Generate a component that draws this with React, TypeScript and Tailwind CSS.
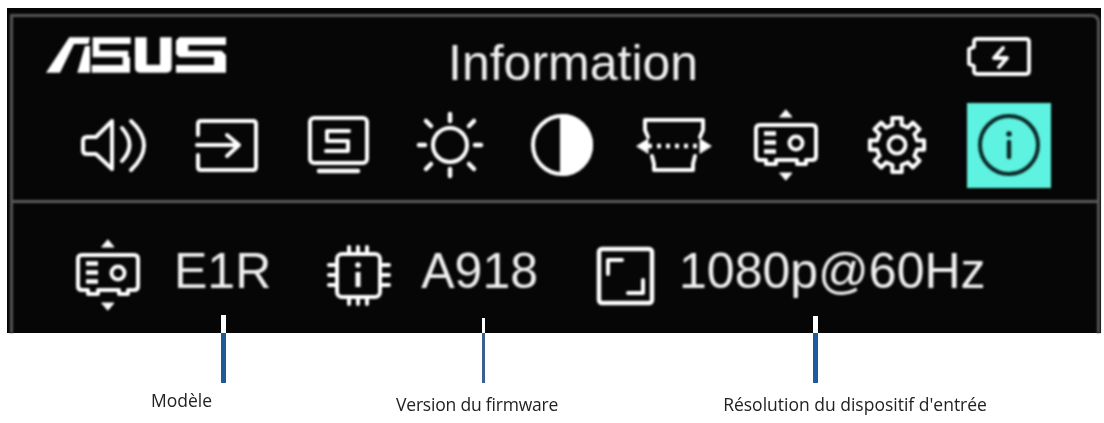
const sans = "[font-family:'Liberation_Sans',Arial,sans-serif]";

const gearPath = (() => {
  const cx = 897, cy = 145;
  const pts: string[] = [];
  for (let i = 0; i < 8; i++) {
    const a = -90 + i * 45;
    const p = (deg: number, r: number) => {
      const t = (deg * Math.PI) / 180;
      return `${(cx + r * Math.cos(t)).toFixed(1)} ${(cy + r * Math.sin(t)).toFixed(1)}`;
    };
    pts.push(p(a - 13, 20.5), p(a - 10, 27.5), p(a + 10, 27.5), p(a + 13, 20.5));
  }
  return "M" + pts.join(" L") + " Z";
})();

function Ico({ i, children }: { i: number; children: React.ReactNode }) {
  return (
    <svg
      width="112"
      height="85"
      viewBox={`${57 + 112 * i} 103 112 85`}
      fill="none"
      stroke="#ffffff"
      strokeWidth="4"
      strokeLinecap="round"
      strokeLinejoin="round"
    >
      {children}
    </svg>
  );
}

function ProjectorShape() {
  return (
    <>
      <path d="M760 125 H812 Q816 125 816 129 V156 Q816 160 812 160 H806 V164 H797 V160 H776 V164 H766 V160 H760 Q756 160 756 156 V129 Q756 125 760 125 Z" />
      <path d="M764 133.500 H776 M764 142.500 H776 M764 151.500 H776" strokeWidth="4.500" strokeLinecap="butt" />
      <circle cx="796" cy="143" r="6.500" />
      <path d="M786 110 L792 117 H780 Z" fill="#ffffff" strokeWidth="1" />
      <path d="M786 180 L792 173 H780 Z" fill="#ffffff" strokeWidth="1" />
    </>
  );
}

function Logo() {
  return (
    <svg width="195" height="52" viewBox="0 0 585 156" fill="#ffffff" className="shrink-0">
      <path d="M18 128 L88 22 H150 L146 42 H102 L60 128 Z" />
      <path d="M112 128 L135 48 H150 V128 Z" />
      <path d="M158 22 H272 V42 H178 V62 H265 V82 H270 V128 H155 V105 H248 V82 H158 V42 Z" />
      <path d="M285 22 H320 V104 H360 V22 H395 V112 Q395 128 380 128 H300 Q285 128 285 112 Z" />
      <path d="M418 22 H558 V45 H445 V62 H545 L558 76 V128 H408 V105 H522 V82 H418 L408 72 V32 Z" />
    </svg>
  );
}

function Battery() {
  return (
    <svg width="70" height="46" viewBox="965 33 70 46" fill="none" stroke="#ffffff" strokeWidth="3.800" strokeLinejoin="round" strokeLinecap="round" className="shrink-0">
      <path d="M978 39 H1027 Q1030 39 1030 42 V71 Q1030 74 1027 74 H978 Q975 74 975 71 V66 L970 64 V49 L975 47 V42 Q975 39 978 39 Z" />
      <path d="M1004 48 L995 58 H1008 L1000 67" />
    </svg>
  );
}

function Projector() {
  return (
    <svg width="68" height="78" viewBox="752 106 68 78" fill="none" stroke="#ffffff" strokeWidth="4" strokeLinecap="round" strokeLinejoin="round" className="shrink-0">
      <ProjectorShape />
    </svg>
  );
}

function Chip() {
  return (
    <svg width="66" height="64" viewBox="326 244 66 64" fill="none" stroke="#ffffff" strokeWidth="4" strokeLinecap="round" strokeLinejoin="round" className="mt-[8px] ml-[55px] shrink-0">
      <rect x="337" y="254" width="43" height="43" rx="5" />
      <path d="M349 247 V254 M358 247 V254 M367 247 V254 M349 297 V304 M358 297 V304 M367 297 V304 M329 265 H337 M329 275 H337 M329 285 H337 M380 265 H389 M380 275 H389 M380 285 H389" />
      <circle cx="358" cy="265" r="2.800" fill="#ffffff" stroke="none" />
      <path d="M358 272 V287" strokeWidth="5" strokeLinecap="butt" />
    </svg>
  );
}

function Resolution() {
  return (
    <svg width="60" height="60" viewBox="596 246 60 60" fill="none" stroke="#ffffff" strokeWidth="4.500" strokeLinecap="round" strokeLinejoin="round" className="mt-[10px] ml-[58px] shrink-0">
      <rect x="599" y="249" width="53" height="54" rx="3" />
      <path d="M622 260 H608 V274 M628 293 H643 V280" strokeWidth="4" />
    </svg>
  );
}

export default function App() {
  const value = `${sans} text-[50px] leading-[50px] text-[#f0f0f0] whitespace-nowrap shrink-0`;
  const label = "[font-family:'Open_Sans',sans-serif] text-[17.500px] leading-[20px] text-[#222222] whitespace-nowrap blur-[0.3px]";
  return (
    <div className="relative w-[1104px] h-[423px] bg-white overflow-hidden pt-[8px] pl-[7px]">
      <div className="w-[1094px] h-[325px] bg-[#060606] pt-[6px] pl-[3px]">
        <div className="w-[1090px] h-[319px] border-t-[3px] border-x-[3px] border-[#555555] rounded-tr-[8px] flex flex-col blur-[0.8px]">
          {/* header */}
          <div className="h-[86px] flex items-start pt-[13px] pl-[27px]">
            <Logo />
            <div className={`${sans} text-[50px] leading-[50px] text-[#f0f0f0] mt-[8px] ml-[213px] shrink-0 whitespace-nowrap`}>Information</div>
            <div className="mt-[3px] ml-[266px]"><Battery /></div>
          </div>
          {/* menu icons */}
          <div className="h-[85px] pl-[44px] flex">
            <Ico i={0}>
              <path d="M83 141 Q83 137 87 137 H96 L112 121 V169 L96 154 H87 Q83 154 83 150 Z" />
              <path d="M122 128 Q137 145 122 161" />
              <path d="M131 121 Q157 145 131 170" />
            </Ico>
            <Ico i={1}>
              <path d="M198 135 V124 Q198 121 201 121 H253 Q256 121 256 124 V167 Q256 170 253 170 H201 Q198 170 198 167 V155" />
              <path d="M197 145 H238 M227 135 L239 145 L227 156" />
            </Ico>
            <Ico i={2}>
              <rect x="310" y="118" width="57" height="45" rx="4" />
              <path d="M319 171 H358" strokeWidth="4.500" />
              <path d="M349 131 H327 V141 H348 V151 H326" />
            </Ico>
            <Ico i={3}>
              <circle cx="450" cy="145" r="17" />
              <path d="M419 145 H425 M475 145 H481 M450 114 V121 M450 169 V176 M426 121 L431 126 M474 121 L469 126 M426 169 L431 164 M474 169 L469 164" strokeWidth="4.500" />
            </Ico>
            <Ico i={4}>
              <circle cx="562" cy="145" r="29" />
              <path d="M562 116 A29 29 0 0 1 562 174 Z" fill="#ffffff" />
            </Ico>
            <Ico i={5}>
              <path d="M700 137 L703 130 V120 H645 V130 L648 137" />
              <path d="M652 156 L654 164 V170 H693 V164 L695 156" />
              <path d="M637 146 L648 139 V153 Z M711 146 L700 139 V153 Z" fill="#ffffff" strokeWidth="1" />
              <path d="M648 146 H700" strokeWidth="4.500" strokeDasharray="4 5" strokeLinecap="butt" />
            </Ico>
            <Ico i={6}>
              <ProjectorShape />
            </Ico>
            <Ico i={7}>
              <path d={gearPath} />
              <circle cx="897" cy="145" r="8.500" />
            </Ico>
            <div className="w-[112px] h-[85px] flex justify-center">
              <div className="w-[84px] h-[85px] bg-[#5ef2e0]">
                <svg width="84" height="85" viewBox="967 103 84 85" fill="none" stroke="#0c2a29" strokeWidth="4" strokeLinecap="round">
                  <circle cx="1009" cy="145" r="29" />
                  <path d="M1009 142 V157" strokeWidth="4.500" />
                  <circle cx="1009" cy="134" r="2.800" fill="#0c2a29" stroke="none" />
                </svg>
              </div>
            </div>
          </div>
          {/* divider */}
          <div className="mt-[12px] h-[3px] bg-[#5c5c5c] shrink-0" />
          {/* values */}
          <div className="flex items-start pl-[61px] pt-[33px]">
            <Projector />
            <div className={`${value} mt-[10px] ml-[32px]`}>E1R</div>
            <Chip />
            <div className={`${value} mt-[10px] ml-[29px]`}>A918</div>
            <Resolution />
            <div className={`${value} mt-[10px] ml-[23px]`}>1080p@60Hz</div>
          </div>
        </div>
      </div>

      {/* leader lines running from the panel to their captions */}
      <div className="absolute left-[221px] top-[315px] w-[5px] h-[18px] bg-white" />
      <div className="absolute left-[221px] top-[333px] w-[5px] h-[50px] bg-[#1f5a96]" />
      <div className="absolute left-[482px] top-[318px] w-[3px] h-[15px] bg-white" />
      <div className="absolute left-[482px] top-[333px] w-[3px] h-[50px] bg-[#3d5f8f]" />
      <div className="absolute left-[813px] top-[316px] w-[5px] h-[17px] bg-white" />
      <div className="absolute left-[813px] top-[333px] w-[5px] h-[50px] bg-[#1f5a9c]" />

      {/* captions */}
      <div className="flex items-start pl-[144px] mt-[57px]">
        <div className={label}>Modèle</div>
        <div className={`${label} mt-[4px] ml-[184px] tracking-[-0.2px]`}>Version du firmware</div>
        <div className={`${label} mt-[4px] ml-[165px]`}>Résolution du dispositif d'entrée</div>
      </div>
    </div>
  );
}
